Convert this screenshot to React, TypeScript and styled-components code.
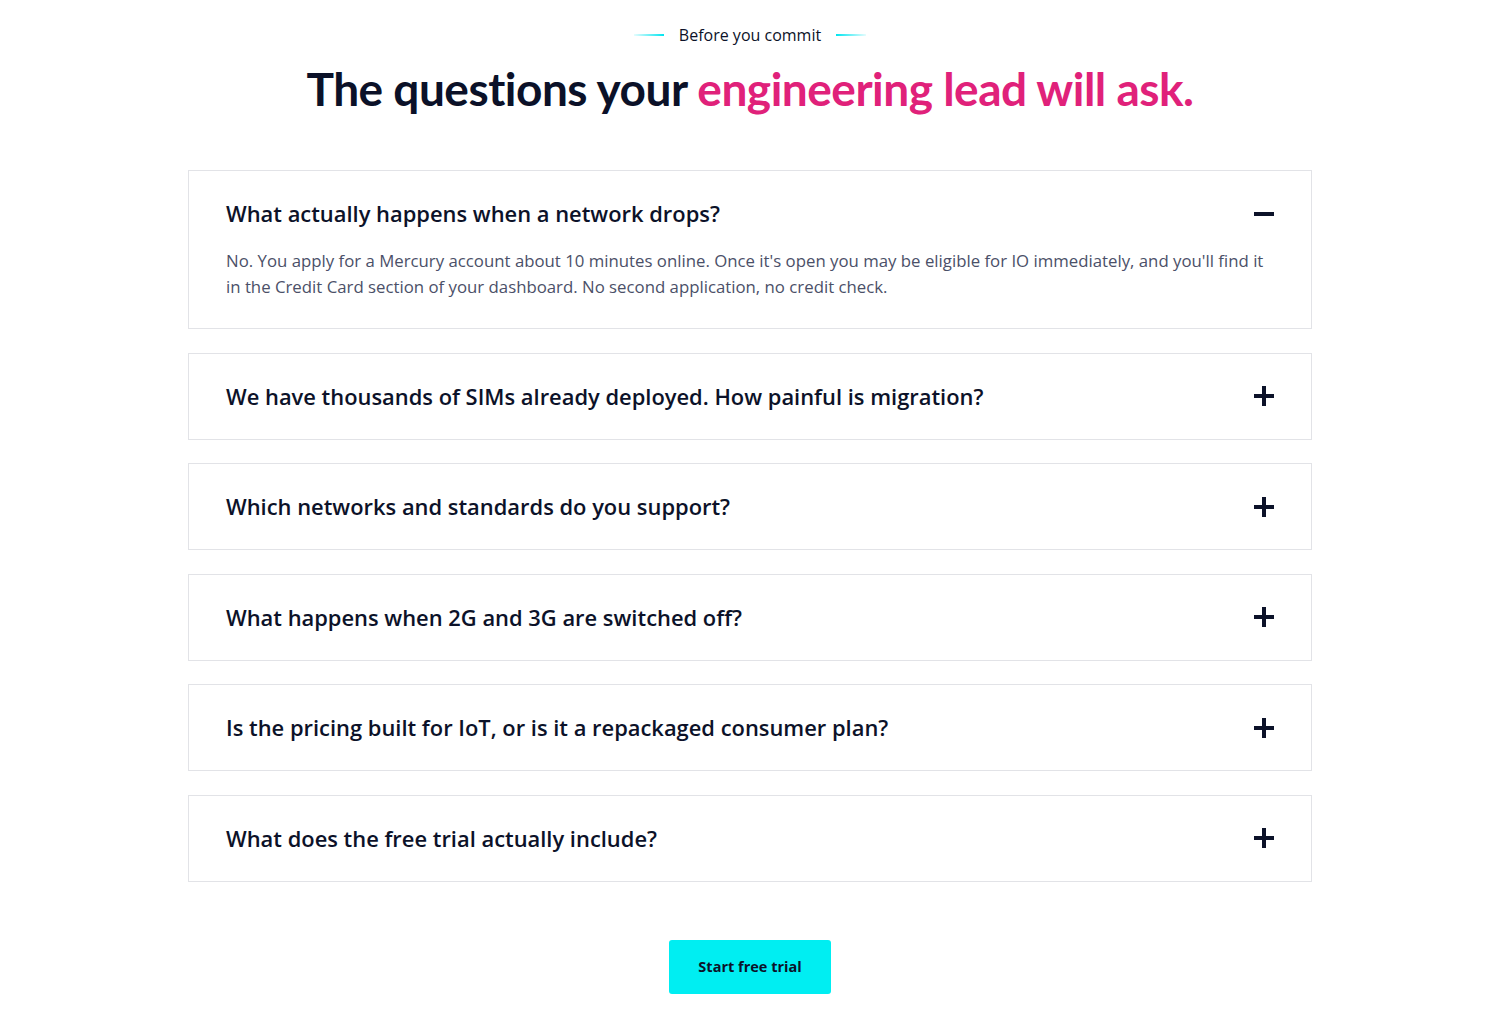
import React, { useState } from "react";
import styled, { createGlobalStyle } from "styled-components";

const Global = createGlobalStyle`
  html, body { margin: 0; padding: 0; background: #ffffff; }
  body { font-family: "Open Sans", Lato, Arial, sans-serif; color: #0c1229; }
  * { box-sizing: border-box; }
`;

const Page = styled.main`
  display: flex;
  flex-direction: column;
  align-items: center;
  padding: 24px 0 26px;
`;

const Eyebrow = styled.div`
  display: flex;
  align-items: center;
  gap: 15px;
  font-size: 16px;
  line-height: 22px;
  color: #0c1229;
`;

const Rule = styled.span<{ $flip?: boolean }>`
  display: block;
  width: 30px;
  height: 2px;
  background: linear-gradient(
    ${(p) => (p.$flip ? "to left" : "to right")},
    rgba(0, 229, 240, 0.1),
    #00e5f0
  );
`;

const Title = styled.h1`
  margin: 15px 0 0;
  font-family: Lato, "Open Sans", Arial, sans-serif;
  font-size: 46px;
  line-height: 56px;
  font-weight: 700;
  letter-spacing: -0.5px;
  color: #0b1128;
`;

const Accent = styled.span`
  color: #e0217a;
`;

const List = styled.div`
  width: 1124px;
  margin-top: 53px;
  display: flex;
  flex-direction: column;
  gap: 23.5px;
`;

const Card = styled.div`
  border: 1px solid #e2e3e7;
  background: #fff;
  padding: 28px 37px 28px 37px;
`;

const Head = styled.button`
  all: unset;
  display: flex;
  width: 100%;
  align-items: center;
  justify-content: space-between;
  cursor: pointer;
`;

const Question = styled.span`
  font-size: 21.9px;
  line-height: 29px;
  font-weight: 600;
  color: #0c1229;
`;

const Answer = styled.p`
  margin: 20px 0 0;
  font-size: 16.8px;
  line-height: 26px;
  color: #4b5068;
  max-width: 1045px;
`;

const Icon = styled.svg`
  width: 20px;
  height: 20px;
  flex: none;
`;

const Button = styled.button`
  margin-top: 58px;
  width: 162px;
  height: 54px;
  border: none;
  border-radius: 3px;
  background: #00eef2;
  color: #0c1229;
  font-family: inherit;
  font-size: 14.5px;
  font-weight: 700;
  cursor: pointer;
`;

const items = [
  {
    q: "What actually happens when a network drops?",
    a: "No. You apply for a Mercury account about 10 minutes online. Once it's open you may be eligible for IO immediately, and you'll find it in the Credit Card section of your dashboard. No second application, no credit check.",
  },
  { q: "We have thousands of SIMs already deployed. How painful is migration?", a: "" },
  { q: "Which networks and standards do you support?", a: "" },
  { q: "What happens when 2G and 3G are switched off?", a: "" },
  { q: "Is the pricing built for IoT, or is it a repackaged consumer plan?", a: "" },
  { q: "What does the free trial actually include?", a: "" },
];

function Toggle({ open }: { open: boolean }) {
  return (
    <Icon viewBox="0 0 20 20" aria-hidden>
      <rect x="0" y="8" width="20" height="4" fill="#0c1229" />
      {!open && <rect x="8" y="0" width="4" height="20" fill="#0c1229" />}
    </Icon>
  );
}

export default function App() {
  const [open, setOpen] = useState(0);
  return (
    <>
      <Global />
      <Page>
        <Eyebrow>
          <Rule />
          Before you commit
          <Rule $flip />
        </Eyebrow>
        <Title>
          The questions your <Accent>engineering lead will ask.</Accent>
        </Title>
        <List>
          {items.map((it, i) => (
            <Card key={i}>
              <Head onClick={() => setOpen(open === i ? -1 : i)}>
                <Question>{it.q}</Question>
                <Toggle open={open === i} />
              </Head>
              {open === i && it.a && <Answer>{it.a}</Answer>}
            </Card>
          ))}
        </List>
        <Button>Start free trial</Button>
      </Page>
    </>
  );
}
